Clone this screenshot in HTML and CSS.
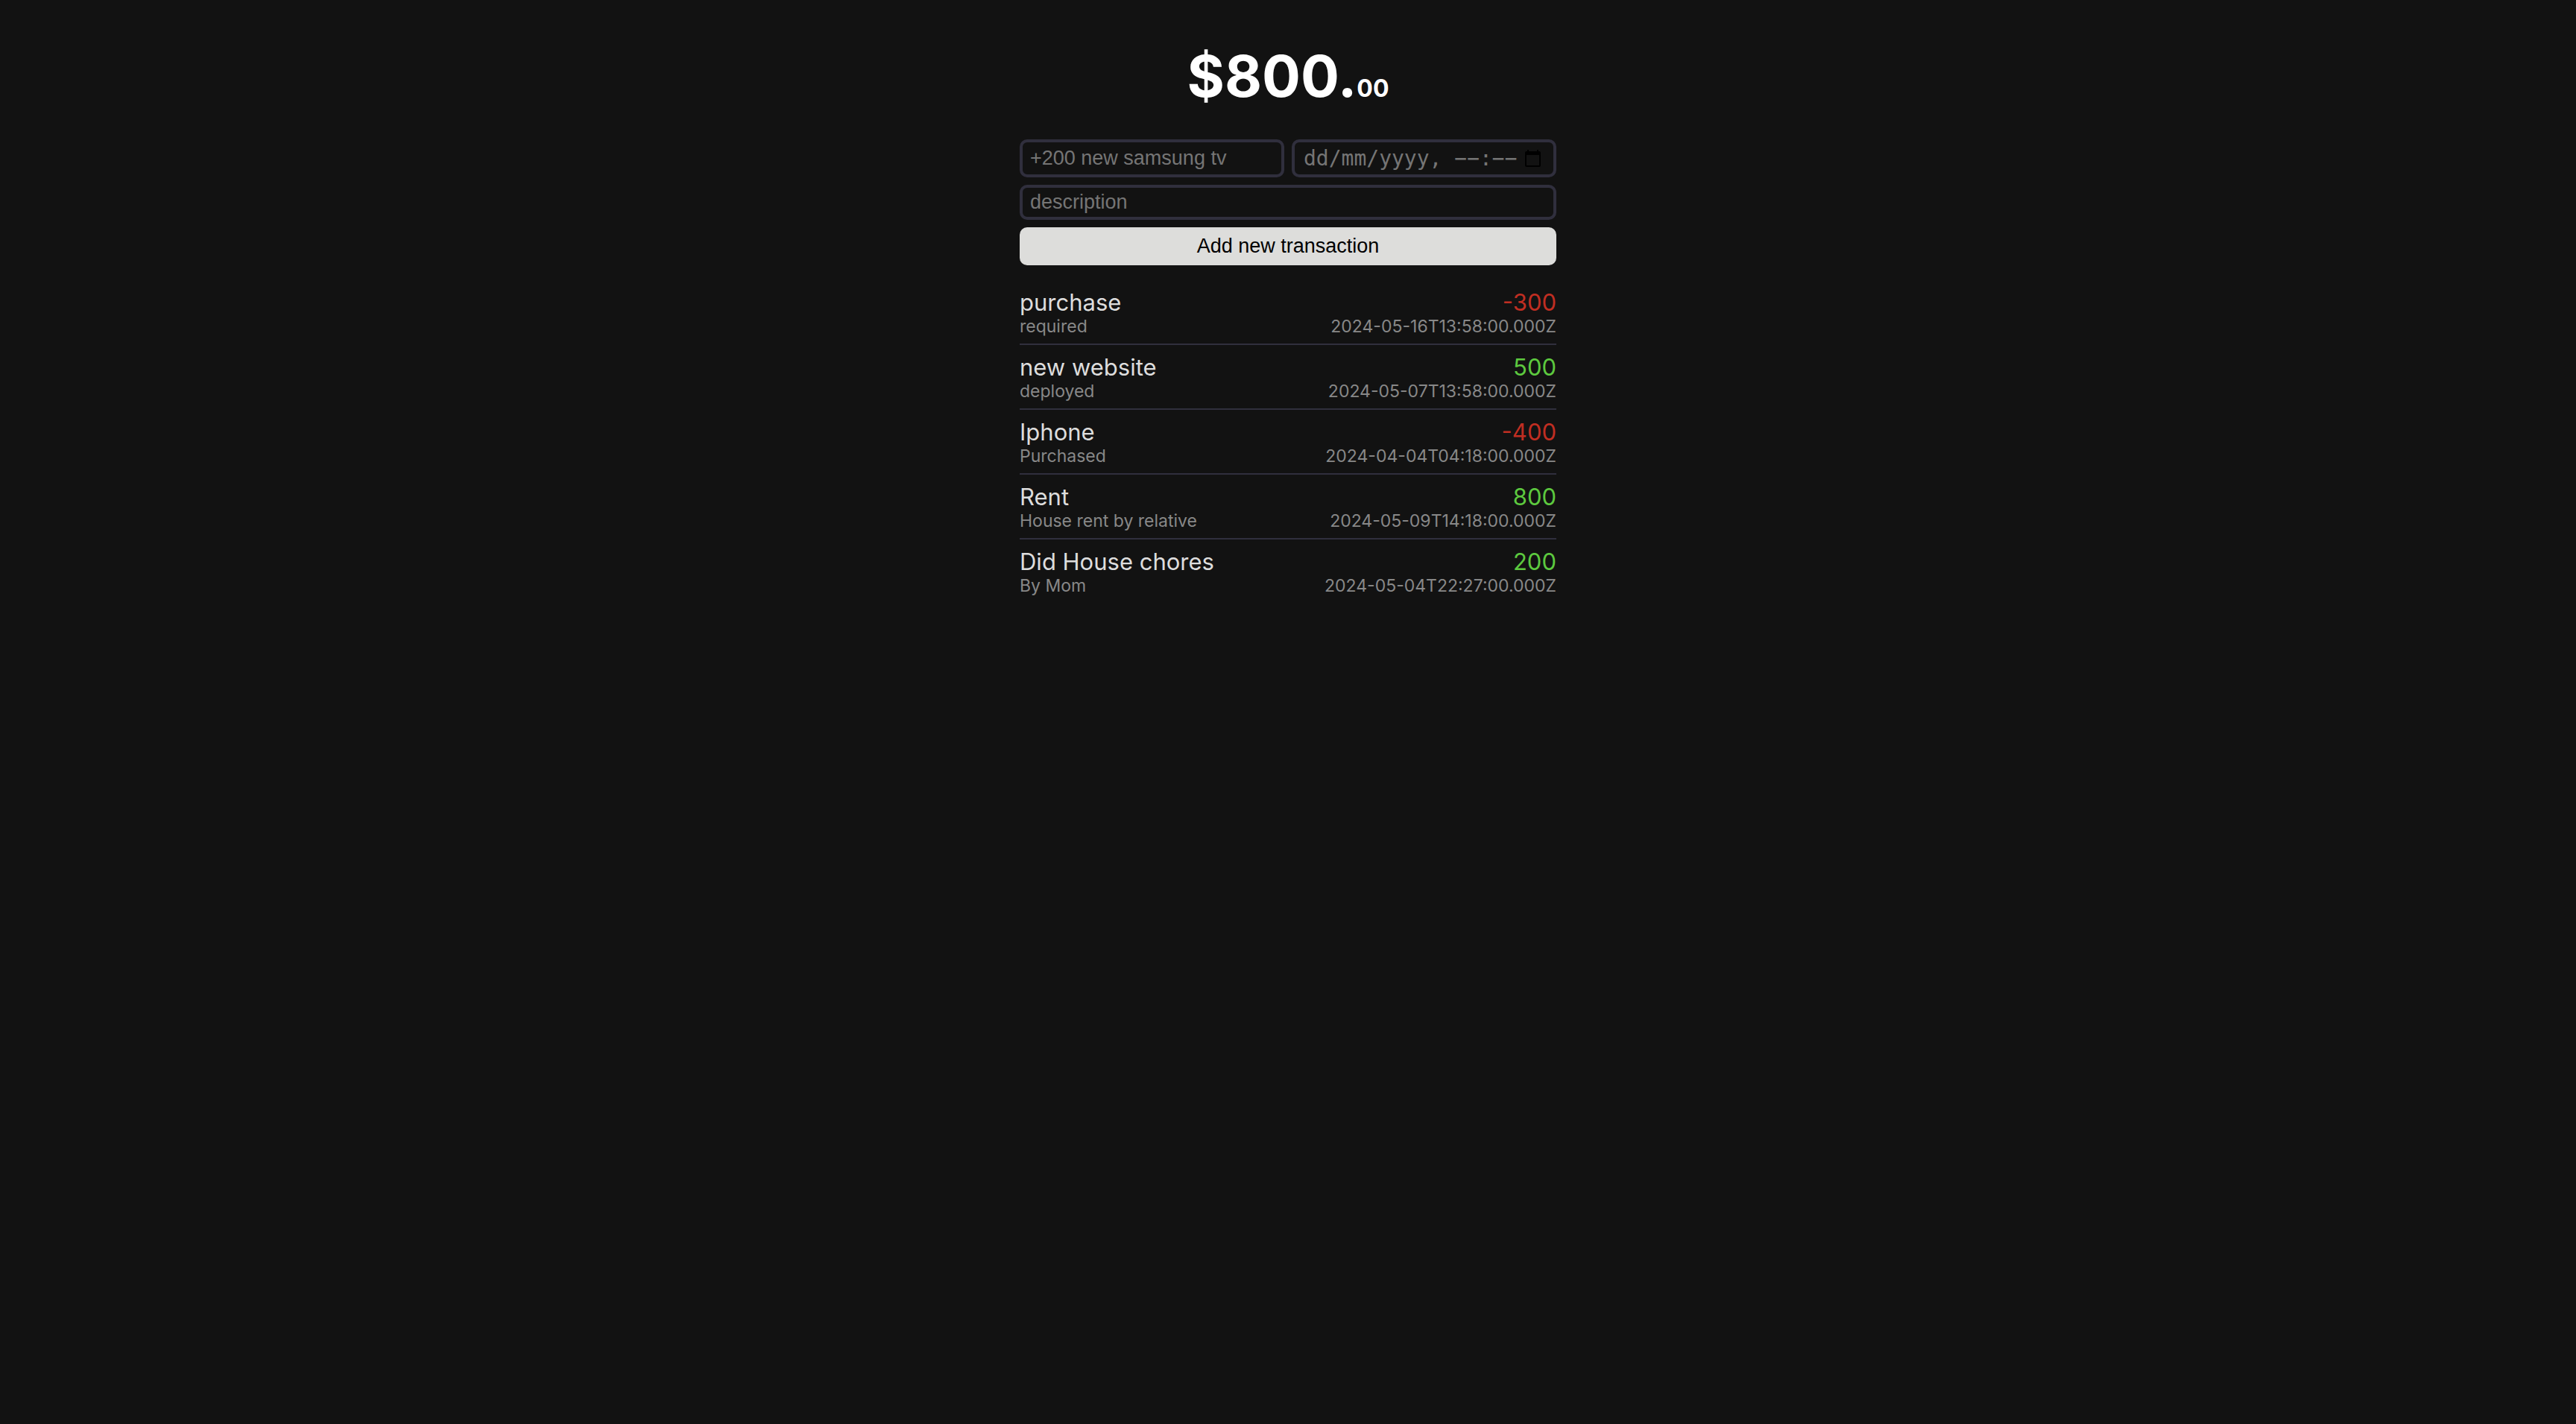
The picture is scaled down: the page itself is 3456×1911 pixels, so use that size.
FILE: index.html
```html
<!DOCTYPE html>
<html lang="en">
<head>
<meta charset="utf-8">
<meta name="viewport" content="width=device-width, initial-scale=1">
<title>Money tracker</title>
<link rel="stylesheet" href="styles.css">
</head>
<body>
<main class="page">
  <h1 class="balance">$800.<span class="cents">00</span></h1>
  <form class="form">
    <div class="basics">
      <input class="field name-field" type="text" aria-label="Amount and name" placeholder="+200 new samsung tv">
      <div class="field date-field">
        <input class="date-input" type="text" aria-label="Date and time" placeholder="dd/mm/yyyy, −−:−−">
        <button class="picker" type="button" aria-label="Open calendar">
          <svg class="picker-icon" viewBox="0 0 21 23" aria-hidden="true">
            <path fill="currentColor" fill-rule="evenodd" d="M3 0h2v2h11V0h2v2h1a2 2 0 0 1 2 2v17a2 2 0 0 1-2 2H2a2 2 0 0 1-2-2V4a2 2 0 0 1 2-2h1zM2 7v14h17V7z"/>
          </svg>
        </button>
      </div>
    </div>
    <input class="field description-field" type="text" aria-label="Description" placeholder="description">
    <button class="submit" type="submit">Add new transaction</button>
  </form>
  <ul class="transactions">
    <li class="transaction">
      <div><div class="name">purchase</div><div class="detail">required</div></div>
      <div class="right"><div class="price minus">-300</div><time class="detail">2024-05-16T13:58:00.000Z</time></div>
    </li>
    <li class="transaction">
      <div><div class="name">new website</div><div class="detail">deployed</div></div>
      <div class="right"><div class="price plus">500</div><time class="detail">2024-05-07T13:58:00.000Z</time></div>
    </li>
    <li class="transaction">
      <div><div class="name">Iphone</div><div class="detail">Purchased</div></div>
      <div class="right"><div class="price minus">-400</div><time class="detail">2024-04-04T04:18:00.000Z</time></div>
    </li>
    <li class="transaction">
      <div><div class="name">Rent</div><div class="detail">House rent by relative</div></div>
      <div class="right"><div class="price plus">800</div><time class="detail">2024-05-09T14:18:00.000Z</time></div>
    </li>
    <li class="transaction">
      <div><div class="name">Did House chores</div><div class="detail">By Mom</div></div>
      <div class="right"><div class="price plus">200</div><time class="detail">2024-05-04T22:27:00.000Z</time></div>
    </li>
  </ul>
</main>
</body>
</html>
```

FILE: styles.css
```css
* {
  box-sizing: border-box;
}

body {
  margin: 0;
  background: #121212;
  color: #ddd;
  font-family: Inter, "Liberation Sans", sans-serif;
}

.page {
  max-width: 720px;
  margin: 0 auto;
  padding: 60px 0;
}

.balance {
  margin: 0 0 43px;
  color: #fff;
  font-size: 77px;
  font-weight: 700;
  line-height: 84px;
  text-align: center;
}

.cents {
  font-size: 32px;
  line-height: 1;
}

.form {
  display: flex;
  flex-direction: column;
  gap: 10px;
}

.basics {
  display: grid;
  grid-template-columns: 1fr 1fr;
  gap: 10px;
}

.field {
  min-width: 0;
  background: transparent;
  border: 4px solid #302f3d;
  border-radius: 10px;
  color: #ddd;
  font-family: "Liberation Sans", Arial, sans-serif;
  font-size: 27px;
}

.name-field,
.date-field {
  height: 51px;
}

.name-field,
.description-field {
  padding: 0 10px;
}

.description-field {
  height: 47px;
}

.date-field {
  display: flex;
  align-items: center;
  padding: 0 17px 0 12px;
}

.date-input {
  flex: 1;
  min-width: 0;
  height: 100%;
  padding: 0;
  background: transparent;
  border: 0;
  color: #ddd;
  font-family: "DejaVu Sans Mono", monospace;
  font-size: 28px;
}

.field::placeholder,
.date-input::placeholder {
  color: #757575;
}

.picker {
  display: flex;
  padding: 0;
  background: none;
  border: 0;
  color: #000;
}

.picker-icon {
  width: 21px;
  height: 23px;
}

.submit {
  height: 51px;
  padding: 0;
  background: #dddddb;
  border: 0;
  border-radius: 10px;
  color: #000;
  font-family: "Liberation Sans", Arial, sans-serif;
  font-size: 27px;
}

.transactions {
  margin: 20px 0 0;
  padding: 0;
  list-style: none;
}

.transaction {
  display: flex;
  justify-content: space-between;
  padding: 10px 0;
  border-bottom: 2px solid #302f3d;
}

.transaction:last-child {
  border-bottom: 0;
}

.name,
.price {
  font-size: 31px;
  line-height: 39px;
}

.detail {
  display: block;
  color: #888;
  font-size: 23px;
  line-height: 26px;
}

.right {
  text-align: right;
}

.plus {
  color: #5dc93f;
}

.minus {
  color: #c02e22;
}
```
